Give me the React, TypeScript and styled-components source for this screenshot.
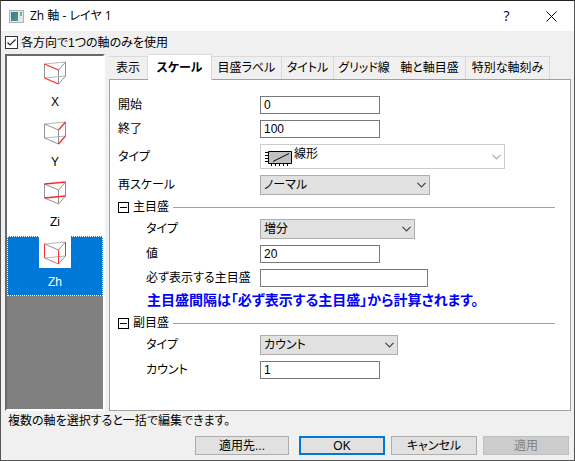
import React, { useId, useState } from "react";
import styled, { createGlobalStyle, css } from "styled-components";

const GlobalStyle = createGlobalStyle`
  *, *::before, *::after { box-sizing: border-box; }
  body {
    margin: 0;
    background: #f0f0f0;
    color: #000;
    font-family: "Liberation Sans", "Noto Sans CJK JP", sans-serif;
    font-size: 12px;
    line-height: 16px;
    font-feature-settings: "palt";
  }
  button, input, select { font: inherit; color: inherit; font-feature-settings: inherit; margin: 0; }
`;

const Dialog = styled.main`
  display: flex;
  flex-direction: column;
  min-height: 100vh;
  border: 1px solid #555;
  border-top-color: #222;
  background: #f0f0f0;
  white-space: nowrap;
`;

const TitleBar = styled.header`
  display: flex;
  align-items: center;
  height: 30px;
  padding-left: 8px;
  background: #fff;
`;

const Title = styled.h1`
  flex: 1;
  margin: 0 0 0 6px;
  font-family: "Open Sans", "Noto Sans CJK JP", sans-serif;
  font-size: 12px;
  font-weight: 400;
`;

const CaptionButton = styled.button`
  display: grid;
  place-items: center;
  width: 45px;
  height: 30px;
  padding: 0;
  border: 0;
  background: none;
  font-family: "Open Sans", sans-serif;
  font-size: 14px;
`;

const CheckRow = styled.label`
  display: flex;
  align-items: center;
  gap: 3px;
  height: 23px;
  padding-left: 4px;
`;

const CheckBoxFrame = styled.span`
  display: grid;
  width: 13px;
  height: 13px;
  > * { grid-area: 1 / 1; }
  svg { pointer-events: none; }
`;

const CheckInput = styled.input`
  appearance: none;
  width: 13px;
  height: 13px;
  border: 1px solid #333;
  background: #fff;
  &:not(:checked) + svg { visibility: hidden; }
`;

const Body = styled.div`
  display: flex;
  flex: 1;
  gap: 4px;
  padding: 0 3px 0 4px;
`;

const AxisList = styled.div`
  flex: 0 0 100px;
  border: 2px solid;
  border-color: #696969 #fff #fff #696969;
  outline: 0;
  background: #808080;
`;

const AxisItem = styled.button<{ $selected: boolean }>`
  display: flex;
  flex-direction: column;
  align-items: center;
  gap: 6px;
  width: 100%;
  height: 60px;
  padding: 0;
  border: 0;
  background: #fff;
  ${(p) =>
    p.$selected &&
    css`
      background: #0078d7;
      color: #fff;
      outline: 1px dotted #fff;
      outline-offset: -1px;
    `}
`;

const IconTile = styled.span`
  display: block;
  width: 32px;
  height: 32px;
  background: #fff;
  svg { display: block; }
`;

const Pages = styled.div`
  display: flex;
  flex: 1;
  flex-direction: column;
  min-width: 0;
`;

const Tabs = styled.div`
  display: flex;
  align-items: flex-end;
  height: 25px;
`;

const Tab = styled.button<{ $width: number; $active: boolean; $open?: boolean }>`
  flex: 0 0 ${(p) => p.$width}px;
  height: 23px;
  padding: 0;
  border: solid #d9d9d9;
  border-width: 1px ${(p) => (p.$open ? 0 : 1)}px 0 0;
  background: #f0f0f0;
  ${(p) =>
    p.$active &&
    css`
      z-index: 1;
      height: 26px;
      margin-bottom: -1px;
      background: #fff;
      font-weight: 700;
    `}
`;

const Panel = styled.section`
  flex: 1;
  padding: 16px 15px 31px 8px;
  border: 1px solid #a0a0a0;
  background: #fff;
`;

const Rows = styled.div<{ $indent?: boolean }>`
  display: grid;
  gap: 6px;
  padding-left: ${(p) => (p.$indent ? 28 : 0)}px;
`;

const Row = styled.div<{ $indent?: boolean }>`
  display: grid;
  grid-template-columns: ${(p) => (p.$indent ? 114 : 142)}px 1fr;
  align-items: center;
`;

const TextField = styled.input<{ $width: number }>`
  width: ${(p) => p.$width}px;
  height: 18px;
  padding: 0 3px;
  border: 1px solid #7a7a7a;
  border-radius: 0;
  background: #fff;
`;

const SelectFrame = styled.div<{ $width: number }>`
  display: grid;
  align-items: center;
  width: ${(p) => p.$width}px;
  max-width: 100%;
  > * { grid-area: 1 / 1; }
  > svg { pointer-events: none; }
`;

const Picker = styled.select<{ $tall?: boolean }>`
  appearance: none;
  width: 100%;
  height: ${(p) => (p.$tall ? 25 : 20)}px;
  padding: ${(p) => (p.$tall ? "0 20px 6px 33px" : "0 20px 0 3px")};
  border: 1px solid #adadad;
  border-radius: 0;
  background: #e1e1e1;
  &:disabled {
    border-color: #ccc;
    background: #fff;
    color: #000;
    opacity: 1;
  }
`;

const Chevron = styled.svg`
  justify-self: end;
  margin-right: 4px;
`;

const ScaleIcon = styled.svg`
  justify-self: start;
  margin: 4px 0 0 5px;
`;

const GroupHeader = styled.h2`
  display: flex;
  align-items: center;
  gap: 4px;
  height: 24px;
  margin: 0;
  font-size: 12px;
  font-weight: 400;
  &::after {
    content: "";
    flex: 1;
    height: 1px;
    background: #a0a0a0;
  }
`;

const Toggle = styled.button`
  display: grid;
  place-items: center;
  width: 11px;
  height: 11px;
  padding: 0;
  border: 1px solid #000;
  background: #fff;
  &::before {
    content: "";
    width: 7px;
    height: 1px;
    background: #000;
  }
`;

const Note = styled.p`
  height: 24px;
  margin: 0;
  padding-left: 29px;
  color: #00f;
  font-size: 14px;
  font-weight: 700;
  line-height: 26px;
`;

const Hint = styled.p`
  margin: 0;
  padding: 2px 7px 7px;
`;

const Actions = styled.footer`
  display: flex;
  justify-content: flex-end;
  gap: 6px;
  padding: 0 5px 5px;
`;

const ActionButton = styled.button<{ $default?: boolean }>`
  width: 86px;
  height: 19px;
  padding: 0;
  border: ${(p) => (p.$default ? "2px solid #0078d7" : "1px solid #adadad")};
  background: #e1e1e1;
  line-height: 14px;
  &:first-child { width: 94px; margin-right: 4px; }
  &:disabled {
    border-color: #bfbfbf;
    background: #ccc;
    color: #838383;
  }
`;

type Axis = "X" | "Y" | "Zi" | "Zh";

const cubeEdges: { d: string; axis: Axis }[] = [
  { d: "M5.5 8 26.5 6M5.5 22 26.5 20", axis: "Zi" },
  { d: "M5.5 8 19.5 14M5.5 22 19.5 28", axis: "X" },
  { d: "M19.5 14 26.5 6M19.5 28 26.5 20", axis: "Y" },
  { d: "M5.5 8V22M26.5 6V20M19.5 14V28", axis: "Zh" },
];

function CubeIcon({ axis }: { axis: Axis }) {
  const sorted = [...cubeEdges].sort((a, b) => Number(a.axis === axis) - Number(b.axis === axis));
  return (
    <svg width="32" height="32" viewBox="0 0 32 32" fill="none" aria-hidden="true">
      {sorted.map((e) => (
        <path
          key={e.axis}
          d={e.d}
          stroke={e.axis === axis ? "#ff2a2a" : e.axis === "Zi" ? "#b8b8b8" : "#929292"}
          strokeWidth={e.axis === axis && axis !== "Zh" ? 1.3 : 1}
        />
      ))}
    </svg>
  );
}

function DownArrow({ color = "#444" }: { color?: string }) {
  return (
    <Chevron width="9" height="6" viewBox="0 0 9 6" fill="none" aria-hidden="true">
      <path d="M.5.8 4.5 4.8 8.5.8" stroke={color} strokeWidth="1.2" />
    </Chevron>
  );
}

function TextRow(props: { label: string; value: string; width?: number; indent?: boolean }) {
  const id = useId();
  return (
    <Row $indent={props.indent}>
      <label htmlFor={id}>{props.label}</label>
      <TextField id={id} $width={props.width ?? 120} defaultValue={props.value} />
    </Row>
  );
}

function SelectRow(props: { label: string; value: string; width: number; indent?: boolean }) {
  const id = useId();
  return (
    <Row $indent={props.indent}>
      <label htmlFor={id}>{props.label}</label>
      <SelectFrame $width={props.width}>
        <Picker id={id}>
          <option>{props.value}</option>
        </Picker>
        <DownArrow />
      </SelectFrame>
    </Row>
  );
}

function ScaleTypeRow() {
  const id = useId();
  return (
    <Row>
      <label htmlFor={id}>タイプ</label>
      <SelectFrame $width={245}>
        <Picker id={id} $tall disabled>
          <option>線形</option>
        </Picker>
        <ScaleIcon width="27" height="16" viewBox="0 0 27 16" fill="none" aria-hidden="true">
          <path d="M3.5.5h23v12h-23z" fill="#c0c0c0" stroke="#000" />
          <path d="M0 1.5h3M0 4.5h3M0 7.5h3M0 10.5h3M6.5 13v2M10.5 13v2M14.5 13v2M18.5 13v2M22.5 13v2" stroke="#000" />
          <path d="M8 10.5 24 2.5" stroke="#000" />
        </ScaleIcon>
        <DownArrow color="#aaa" />
      </SelectFrame>
    </Row>
  );
}

const axes: Axis[] = ["X", "Y", "Zi", "Zh"];

const tabs = [
  { label: "表示", width: 39 },
  { label: "スケール", width: 64 },
  { label: "目盛ラベル", width: 70 },
  { label: "タイトル", width: 52 },
  { label: "グリッド線", width: 60, open: true },
  { label: "軸と軸目盛", width: 72 },
  { label: "特別な軸刻み", width: 84 },
];

export default function App() {
  const [axis, setAxis] = useState<Axis>("Zh");
  const [tab, setTab] = useState("スケール");
  return (
    <>
      <GlobalStyle />
      <Dialog>
        <TitleBar>
          <svg width="15" height="13" viewBox="0 0 15 13" aria-hidden="true">
            <defs>
              <linearGradient id="app-icon" x2="1" y2="1">
                <stop stopColor="#3c78a0" />
                <stop offset="1" stopColor="#4c9a68" />
              </linearGradient>
            </defs>
            <path d="M.5.5h14v12H.5z" fill="#e4e8ea" stroke="#a8b0b4" />
            <path d="M2 2h7v9H2z" fill="url(#app-icon)" />
            <path d="M11 2h2v4h-2z" fill="#78a8a0" />
          </svg>
          <Title>Zh 軸 - レイヤ 1</Title>
          <CaptionButton aria-label="ヘルプ">?</CaptionButton>
          <CaptionButton aria-label="閉じる">
            <svg width="11" height="11" viewBox="0 0 11 11" aria-hidden="true">
              <path d="M.5.5l10 10M10.5.5l-10 10" stroke="#000" />
            </svg>
          </CaptionButton>
        </TitleBar>
        <CheckRow>
          <CheckBoxFrame>
            <CheckInput type="checkbox" defaultChecked />
            <svg width="13" height="13" viewBox="0 0 13 13" fill="none" aria-hidden="true">
              <path d="M2.5 6.5 5 9 10.5 3.5" stroke="#222" strokeWidth="1.2" />
            </svg>
          </CheckBoxFrame>
          各方向で1つの軸のみを使用
        </CheckRow>
        <Body>
          <AxisList role="listbox" aria-label="軸">
            {axes.map((a) => (
              <AxisItem key={a} role="option" aria-selected={a === axis} $selected={a === axis} onClick={() => setAxis(a)}>
                <IconTile>
                  <CubeIcon axis={a} />
                </IconTile>
                {a}
              </AxisItem>
            ))}
          </AxisList>
          <Pages>
            <Tabs role="tablist">
              {tabs.map((t) => (
                <Tab
                  key={t.label}
                  role="tab"
                  aria-selected={t.label === tab}
                  $width={t.width}
                  $active={t.label === tab}
                  $open={t.open}
                  onClick={() => setTab(t.label)}
                >
                  {t.label}
                </Tab>
              ))}
            </Tabs>
            <Panel role="tabpanel">
              <Rows>
                <TextRow label="開始" value="0" />
                <TextRow label="終了" value="100" />
                <ScaleTypeRow />
                <SelectRow label="再スケール" value="ノーマル" width={170} />
              </Rows>
              <GroupHeader>
                <Toggle aria-label="主目盛を折りたたむ" />
                主目盛
              </GroupHeader>
              <Rows $indent>
                <SelectRow indent label="タイプ" value="増分" width={155} />
                <TextRow indent label="値" value="20" />
                <TextRow indent label="必ず表示する主目盛" value="" width={168} />
              </Rows>
              <Note>主目盛間隔は「必ず表示する主目盛」から計算されます。</Note>
              <GroupHeader>
                <Toggle aria-label="副目盛を折りたたむ" />
                副目盛
              </GroupHeader>
              <Rows $indent>
                <SelectRow indent label="タイプ" value="カウント" width={138} />
                <TextRow indent label="カウント" value="1" />
              </Rows>
            </Panel>
          </Pages>
        </Body>
        <Hint>複数の軸を選択すると一括で編集できます。</Hint>
        <Actions>
          <ActionButton>適用先...</ActionButton>
          <ActionButton $default>OK</ActionButton>
          <ActionButton>キャンセル</ActionButton>
          <ActionButton disabled>適用</ActionButton>
        </Actions>
      </Dialog>
    </>
  );
}
